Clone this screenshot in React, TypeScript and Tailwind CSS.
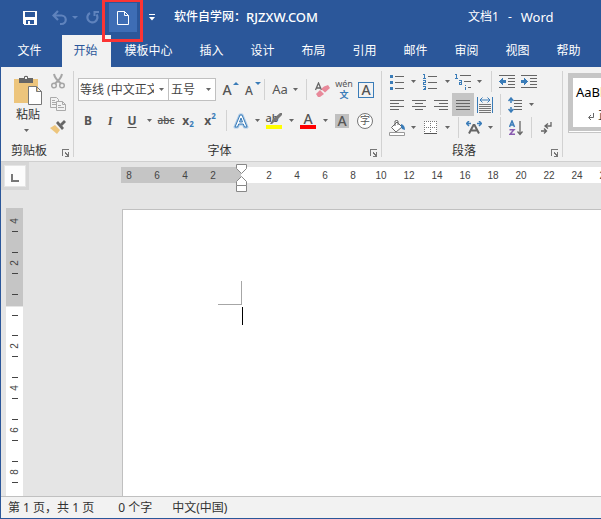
import type { FC, ReactNode } from 'react'
import clsx from 'clsx'

const tabs = ['模板中心', '插入', '设计', '布局', '引用', '邮件', '审阅', '视图', '帮助']

const Caret: FC<{ label: string; className?: string }> = ({ label, className }) => (
    <button aria-label={label} className={clsx('flex h-full shrink-0 items-center justify-center hover:bg-[#d5d5d5]', className ?? 'w-[10px]')}>
        <svg width="5" height="3" viewBox="0 0 5 3"><path d="M0 0h5L2.5 3z" fill="#666" /></svg>
    </button>
)

const Tool: FC<{ label: string; children: ReactNode; className?: string; active?: boolean }> = ({ label, children, className, active }) => (
    <button
        aria-label={label}
        className={clsx('relative flex h-full shrink-0 items-center justify-center hover:bg-[#d5d5d5]', className ?? 'w-[22px]', active && 'bg-[#c5c5c5]')}
    >
        {children}
    </button>
)

const Divider: FC<{ className: string }> = ({ className }) => (
    <span className={clsx('h-[21px] w-px shrink-0 bg-[#d2d2d2]', className)} />
)

const Launcher: FC<{ label: string }> = ({ label }) => (
    <button aria-label={label} className="absolute right-[3px] bottom-1">
        <svg width="8" height="8" viewBox="0 0 8 8" shapeRendering="crispEdges">
            <path d="M.5 6.5v-6h6" fill="none" stroke="#777" />
            <path d="M3 3h1v1h1v1h1V3h1v5H3V7h2V6H4V5H3z" fill="#777" />
        </svg>
    </button>
)

const Group: FC<{ name: string; children: ReactNode; className: string; labelClass: string }> = ({ name, children, className, labelClass }) => (
    <section aria-label={name} className={clsx('relative flex shrink-0 flex-col', className)}>
        <div className="flex-1">{children}</div>
        <div className={clsx('h-5 text-center leading-5 text-[#333]', labelClass)}>{name}</div>
        <Launcher label={name + '设置'} />
    </section>
)

const GroupLine = () => <span className="my-1 w-px shrink-0 bg-[#d2d2d2]" />

const Lines: FC<{ d: string }> = ({ d }) => (
    <svg width="16" height="16" viewBox="0 0 16 16" shapeRendering="crispEdges">
        <path d={d} stroke="#666" fill="none" />
    </svg>
)

const TitleBar = () => (
    <header className="flex h-[35px] items-center whitespace-nowrap text-white">
        <button aria-label="保存" className="ml-[22px] flex h-7 w-[14px] items-center">
            <svg width="14" height="14" viewBox="0 0 14 14" shapeRendering="crispEdges">
                <path fillRule="evenodd" d="M0 0h14v14H1l-1-1zM2 1v5h10V1zM3 9v4h2v-3h2v3h4V9z" fill="#fff" />
            </svg>
        </button>
        <button aria-label="撤消" className="ml-[15px] flex h-7 w-4 items-center">
            <svg width="16" height="16" viewBox="0 0 16 16" fill="none" stroke="#5f83bd" strokeWidth="2">
                <path d="M6 1L1.500 5.500 6 10M2 5.500h7.500a4 4 0 0 1 0 8.500H8" strokeWidth="2.200" />
            </svg>
        </button>
        <button aria-label="撤消选项" className="ml-1 flex h-7 w-[6px] items-center">
            <svg width="6" height="3" viewBox="0 0 6 3"><path d="M0 0h6L3 3z" fill="#5f83bd" /></svg>
        </button>
        <button aria-label="重复" className="ml-2 flex h-7 w-4 items-center">
            <svg width="14" height="15" viewBox="0 0 14 15" fill="none" stroke="#5f83bd" strokeWidth="2.200">
                <path d="M4 3A5 5 0 1 0 10.500 4.500" />
                <path d="M8.500 6V2H13" strokeWidth="2" />
            </svg>
        </button>
        <button aria-label="新建" className="relative ml-[7px] flex h-[29px] w-7 items-center justify-center bg-[#3e6db5]">
            <svg width="12" height="14" viewBox="0 0 12 14" fill="none" stroke="#fff">
                <path d="M.5.5h7l4 4v9H.5zM7.500.5v4h4" />
            </svg>
            <span className="absolute -top-1 -left-[7px] h-[43px] w-[41px] border-3 border-[#fb3434]" />
        </button>
        <button aria-label="自定义快速访问工具栏" className="ml-3 flex h-7 w-[6px] items-center">
            <svg width="6" height="7" viewBox="0 0 6 7" fill="#fff"><path d="M0 0h6v1H0zM0 3h6L3 6.500z" /></svg>
        </button>
        <span className="ml-[19px] flex items-center font-medium">软件自学网：<span className="text-[13px]">RJZXW.COM</span></span>
        <h1 className="ml-[150px] flex items-center gap-[9px]">
            <span>文档1</span>
            <span>-</span>
            <span className="text-[13px]">Word</span>
        </h1>
    </header>
)

const TabBar = () => (
    <nav className="flex h-8 overflow-hidden whitespace-nowrap text-white">
        <button className="w-[61px] shrink-0 pr-1">文件</button>
        <button className="w-[49px] shrink-0 bg-[#f2f2f2] pr-[2px] text-[#2b579a]">开始</button>
        {tabs.map((tab) => (
            <button key={tab} className={clsx('shrink-0', tab.length > 2 ? 'w-[75px]' : 'w-[51px]')}>{tab}</button>
        ))}
    </nav>
)

const Clipboard = () => (
    <Group name="剪贴板" className="w-[72px]" labelClass="pr-4">
        <div className="flex">
            <button className="ml-3 flex w-[30px] shrink-0 flex-col items-center pt-2">
                <svg width="30" height="30" viewBox="0 0 30 30">
                    <path d="M1 4h24v24H1z" fill="#edc57c" />
                    <path d="M6 3h5V1.500Q13 0 15 1.500V3h5v5H6z" fill="#666" />
                    <path d="M12 2h2v2h-2z" fill="#f2f2f2" />
                    <path d="M15.500 11.500h8l5 5v13h-13zM23.500 11.500v5h5" fill="#fff" stroke="#777" />
                </svg>
                <span className="h-5 leading-5 text-[#333]">粘贴</span>
                <svg className="mt-1 mr-[3px]" width="5" height="3" viewBox="0 0 5 3"><path d="M0 0h5L2.500 3z" fill="#666" /></svg>
            </button>
            <div className="ml-[7px] flex flex-col gap-2 pt-[6px]">
                <button aria-label="剪切">
                    <svg width="16" height="16" viewBox="0 0 16 16" fill="none" stroke="#a6a6a6" strokeWidth="1.500">
                        <path d="M4 1q1 5 7 9.500M12 1q-1 5-7 9.500" strokeWidth="2" />
                        <circle cx="4" cy="12.500" r="2.300" /><circle cx="12" cy="12.500" r="2.300" />
                    </svg>
                </button>
                <button aria-label="复制">
                    <svg width="16" height="15" viewBox="0 0 16 15" fill="#f2f2f2" stroke="#aaa">
                        <path d="M.5.500h6l2 2v8h-8zM2 3.500h3M2 5.500h4M2 7.500h4" />
                        <path d="M6.500 4.500h6l3 3v6h-9zM12.500 4.500v3h3M8 8.500h3M8 10.500h6" />
                    </svg>
                </button>
                <button aria-label="格式刷">
                    <svg width="16" height="14" viewBox="0 0 16 14">
                        <path d="M5 5l5 5-3 4-7-6z" fill="#edc57c" />
                        <path d="M6 3l2-2 6 7-2 2z" fill="#666" />
                        <path d="M10 4l4-4 2 2-4 4z" fill="#666" />
                    </svg>
                </button>
            </div>
        </div>
    </Group>
)

const Arrow: FC<{ d: string; className: string }> = ({ d, className }) => (
    <svg className={clsx('absolute', className)} width="6" height="3" viewBox="0 0 6 3"><path d={d} fill="#3a7cb8" /></svg>
)

const FontGroup = () => (
    <Group name="字体" className="w-[307px]" labelClass="pr-4">
        <div className="mt-[11px] ml-1 flex h-[23px] items-center">
            <label className="relative h-full w-[91px] shrink-0">
                <select aria-label="字体名称" className="h-full w-full appearance-none border border-[#c0c0c0] bg-white pr-[14px] pl-px text-[#444]">
                    <option>等线 (中文正文)</option>
                </select>
                <svg className="absolute top-[10px] right-[5px]" width="5" height="3" viewBox="0 0 5 3"><path d="M0 0h5L2.500 3z" fill="#666" /></svg>
            </label>
            <label className="relative h-full w-[47px] shrink-0">
                <select aria-label="字号" className="h-full w-full appearance-none border border-l-0 border-[#c0c0c0] bg-white pl-[2px] text-[#444]">
                    <option>五号</option>
                </select>
                <svg className="absolute top-[10px] right-[5px]" width="5" height="3" viewBox="0 0 5 3"><path d="M0 0h5L2.500 3z" fill="#666" /></svg>
            </label>
            <Tool label="增大字号" className="ml-[2px] w-[22px]">
                <span className="mr-1 text-sm font-medium">A</span>
                <Arrow d="M3 0l3 3H0z" className="top-1 right-px" />
            </Tool>
            <Tool label="减小字号">
                <span className="mt-[2px] mr-1 text-xs font-medium">A</span>
                <Arrow d="M0 0h6L3 3z" className="top-1 right-px" />
            </Tool>
            <Divider className="mr-[5px] ml-[2px]" />
            <Tool label="更改大小写" className="w-5"><span className="text-[13px]">Aa</span></Tool>
            <Caret label="大小写选项" />
            <Divider className="mr-1 ml-[6px]" />
            <Tool label="清除所有格式">
                <svg width="16" height="16" viewBox="0 0 16 16">
                    <path d="M1.500 8L4.500 1l3 7M2.500 6h4" stroke="#666" strokeWidth="1.300" fill="none" />
                    <path d="M10 4.500l4-1.500 2 3-5 4.500-4-3.500z" fill="#e8899a" />
                    <path d="M6 8l4 4-4 3H4l-2-3z" fill="#e8899a" />
                </svg>
            </Tool>
            <Tool label="拼音指南" className="w-[22px] flex-col">
                <span className="h-[10px] text-[9px] leading-[10px]">wén</span>
                <span className="h-3 text-[9px] leading-[12px] font-bold text-[#3a7cb8]">文</span>
            </Tool>
            <Tool label="字符边框">
                <span className="flex h-4 w-4 items-center justify-center border border-[#3a7cb8] text-sm font-medium">A</span>
            </Tool>
        </div>
        <div className="mt-2 ml-[3px] flex h-[23px] items-center">
            <Tool label="加粗"><b>B</b></Tool>
            <Tool label="倾斜"><i className="font-serif font-bold">I</i></Tool>
            <Tool label="下划线"><b className="underline underline-offset-2">U</b></Tool>
            <Caret label="下划线选项" className="w-3" />
            <Tool label="删除线"><s className="text-[10px] font-medium">abc</s></Tool>
            <Tool label="下标"><b>x</b><span className="mt-2 text-[8px] font-bold text-[#3a7cb8]">2</span></Tool>
            <Tool label="上标"><b>x</b><span className="mb-2 text-[8px] font-bold text-[#3a7cb8]">2</span></Tool>
            <Divider className="mr-[3px] ml-[5px]" />
            <Tool label="文本效果">
                <svg width="18" height="18" viewBox="0 0 18 18">
                    <path d="M3 15L8 3h2l5 12h-2.500l-1.200-3H6.700l-1.200 3zM7.500 10h3L9 6z" fill="#fff" stroke="#a9c8e6" strokeWidth="3" strokeLinejoin="round" />
                    <path d="M3 15L8 3h2l5 12h-2.500l-1.200-3H6.700l-1.200 3zM7.500 10h3L9 6z" fill="#fff" stroke="#3a7cb8" />
                </svg>
            </Tool>
            <Caret label="文本效果选项" />
            <Tool label="突出显示" className="w-6 flex-col">
                <span className="mr-1 h-[13px] text-[11px] leading-[12px] font-medium">ab</span>
                <span className="h-1 w-4 bg-[#ffff00]" />
                <svg className="absolute top-1 left-[8px]" width="12" height="12" viewBox="0 0 12 12"><path d="M10 0h2v2L6 8 4 9 2 11H0l3-5z" fill="#777" /></svg>
            </Tool>
            <Caret label="突出显示颜色" />
            <Tool label="字体颜色" className="w-6 flex-col">
                <span className="h-[13px] text-sm leading-[13px] font-medium">A</span>
                <span className="h-1 w-4 bg-[#ff0000]" />
            </Tool>
            <Caret label="字体颜色选项" />
            <Tool label="字符底纹" className="w-6">
                <span className="flex h-[14px] w-[14px] items-center justify-center bg-[#c0c0c0] text-sm font-medium">A</span>
            </Tool>
            <Tool label="带圈字符">
                <span className="flex h-4 w-4 shrink-0 items-center justify-center rounded-full border border-[#777] bg-white text-[10px]">字</span>
            </Tool>
        </div>
    </Group>
)

const ParagraphGroup = () => (
    <Group name="段落" className="w-[180px] pl-1" labelClass="pr-5">
        <div className="mt-[3px] flex h-[23px] items-center">
            <Tool label="项目符号">
                <svg width="14" height="16" viewBox="0 0 14 16" shapeRendering="crispEdges">
                    <path d="M0 1h3v3H0zM0 7h3v3H0zM0 13h3v3H0z" fill="#3a7cb8" />
                    <path d="M5 2.500h9M5 8.500h9M5 14.500h9" stroke="#666" />
                </svg>
            </Tool>
            <Caret label="项目符号库" />
            <Tool label="编号" className="w-6">
                <svg width="14" height="16" viewBox="0 0 14 16" shapeRendering="crispEdges">
                    <path d="M0 .5h1.500V4.500M0 4.500h3M0 6.500h2.500v2H.5v2H3M0 12.500h2.500v3H0M1 14h2" stroke="#3a7cb8" fill="none" />
                    <path d="M5 2.500h9M5 8.500h9M5 14.500h9" stroke="#666" />
                </svg>
            </Tool>
            <Caret label="编号库" />
            <Tool label="多级列表">
                <svg width="16" height="16" viewBox="0 0 16 16" shapeRendering="crispEdges">
                    <path d="M0 .5h1.500V4M0 4.500h3M4 6.500h2.500v4H4.500v-2H6M10.500 11v1M10.500 13v3" stroke="#3a7cb8" fill="none" />
                    <path d="M5 1.500h11M9 7.500h7M13 13.500h3" stroke="#666" />
                </svg>
            </Tool>
            <Caret label="多级列表库" />
            <Divider className="mr-1 ml-[7px]" />
            <Tool label="减少缩进量">
                <svg width="16" height="13" viewBox="0 0 16 13" shapeRendering="crispEdges">
                    <path d="M0 .5h16M9 3.500h7M9 6.500h7M9 9.500h7M0 12.500h16" stroke="#666" />
                    <path d="M0 6.500L4 3v2h3v3H4v2z" fill="#3a7cb8" />
                </svg>
            </Tool>
            <Tool label="增加缩进量">
                <svg width="16" height="13" viewBox="0 0 16 13" shapeRendering="crispEdges">
                    <path d="M0 .5h16M9 3.500h7M9 6.500h7M9 9.500h7M0 12.500h16" stroke="#666" />
                    <path d="M7 6.500L3 3v2H0v3h3v2z" fill="#3a7cb8" />
                </svg>
            </Tool>
        </div>
        <div className="flex h-[23px] items-center">
            <Tool label="左对齐"><Lines d="M1 3.500h14M1 6.500h9M1 9.500h14M1 12.500h9" /></Tool>
            <Tool label="居中"><Lines d="M1 3.500h14M4 6.500h8M1 9.500h14M4 12.500h8" /></Tool>
            <Tool label="右对齐"><Lines d="M1 3.500h14M6 6.500h9M1 9.500h14M6 12.500h9" /></Tool>
            <Tool label="两端对齐" active><Lines d="M1 3.500h14M1 6.500h14M1 9.500h14M1 12.500h14" /></Tool>
            <Tool label="分散对齐">
                <svg width="16" height="16" viewBox="0 0 16 16">
                    <path d="M2 7.500h12M2 9.500h12M2 11.500h12M2 13.500h12M2 15.500h12" stroke="#777" />
                    <path d="M.5 0v16M15.500 0v16M3 3h10M5.500.5L3 3l2.500 2.500M10.500.5L13 3l-2.500 2.500" fill="none" stroke="#3a7cb8" />
                </svg>
            </Tool>
            <Divider className="mr-[3px] ml-1" />
            <Tool label="行距">
                <svg width="14" height="16" viewBox="0 0 14 16">
                    <path d="M6 3.500h8M6 6.500h8M6 9.500h8M6 12.500h8" stroke="#666" />
                    <path d="M3 1v5M3 10v5M.5 4L3 1l2.500 3M.5 12L3 15l2.500-3" stroke="#3a7cb8" strokeWidth="1.500" fill="none" />
                </svg>
            </Tool>
            <Caret label="行距选项" />
        </div>
        <div className="flex h-[23px] items-center">
            <Tool label="底纹">
                <svg width="17" height="16" viewBox="0 0 17 16">
                    <path d="M8 2l5 5-6 5-4.500-4.500zM6 6V1q2-1 3 0v4" fill="#fff" stroke="#666" />
                    <path d="M12 4q4 1 4 6l-3-1-1-2z" fill="#3a7cb8" />
                    <path d="M.5 12.500h15v3H.5z" fill="#fff" stroke="#999" />
                </svg>
            </Tool>
            <Caret label="底纹颜色" />
            <Tool label="边框" className="w-6">
                <svg width="13" height="13" viewBox="0 0 13 13" shapeRendering="crispEdges">
                    <path d="M0 0h13v13H0z" fill="#fff" />
                    <path d="M0 .5h13M0 6.500h13M.5 0v13M6.500 0v13M12.500 0v13" stroke="#777" strokeDasharray="1 1" />
                    <path d="M0 12.500h13" stroke="#555" />
                </svg>
            </Tool>
            <Caret label="边框选项" />
            <Divider className="mr-1 ml-[6px]" />
            <Tool label="中文版式">
                <svg width="16" height="13" viewBox="0 0 16 13" fill="none">
                    <path d="M3 12.500L7.500 4h1L13 12.500M5 9.500h6" stroke="#666" strokeWidth="2" />
                    <path d="M3 0L.5 2.500 3 5M.5 2.500H5M13 0l2.500 2.500L13 5M15.500 2.500H11" stroke="#3a7cb8" strokeWidth="1.500" />
                </svg>
            </Tool>
            <Caret label="中文版式选项" />
            <Divider className="mr-1 ml-[5px]" />
            <Tool label="排序">
                <svg width="14" height="16" viewBox="0 0 14 16" fill="none">
                    <path d="M.5 7L3 1l2.500 6M1.500 5h3" stroke="#3a7cb8" strokeWidth="1.500" />
                    <path d="M.5 9.700h4.500L1 14.300h5" stroke="#8a5bb0" strokeWidth="1.500" />
                    <path d="M11 1v13M8.500 11.500L11 14.500l2.500-3" stroke="#666" strokeWidth="1.300" />
                </svg>
            </Tool>
            <Divider className="mx-1" />
            <Tool label="显示编辑标记">
                <svg width="12" height="12" viewBox="0 0 12 12" fill="none" stroke="#666" strokeWidth="1.300">
                    <path d="M10 0v4H5M7 1.500L4 4l3 2.500M0 9h5M3 6.500L5.500 9 3 11.500" />
                </svg>
            </Tool>
        </div>
    </Group>
)

const Ribbon = () => (
    <div className="flex h-[95px] overflow-hidden border-b border-[#cfcfcf] bg-[#f2f2f2] whitespace-nowrap text-[#555]">
        <Clipboard />
        <GroupLine />
        <FontGroup />
        <GroupLine />
        <ParagraphGroup />
        <GroupLine />
        <div className="ml-[5px] min-w-0 flex-1 self-start pt-[6px]">
            <div className="h-[60px] border border-r-0 border-[#c6c6c6] bg-white">
                <button className="flex h-[57px] w-[72px] flex-col items-start border-4 border-[#c6c6c6] bg-white pl-[3px] text-black">
                    <span className="mt-1 text-[13px] leading-5">AaBbCcDd</span>
                    <span className="mt-1 ml-3 flex items-center leading-5 text-[#444]">
                        <svg className="mr-1" width="6" height="7" viewBox="0 0 6 7" fill="none" stroke="#666"><path d="M5.500 0v4.500H1M3 2L.5 4.500 3 7" /></svg>
                        正文
                    </span>
                </button>
            </div>
        </div>
    </div>
)

const HorizontalRuler = () => (
    <div className="relative flex h-4 min-w-0 flex-1 font-['Liberation_Sans',sans-serif] text-[10px] leading-[17px]">
        <div className="flex w-[120px] shrink-0 justify-end overflow-hidden bg-[#c5c5c5] pr-[14px]">
            {[8, 6, 4, 2].map((n) => <span key={n} className="w-7 shrink-0 text-center">{n}</span>)}
        </div>
        <div className="flex min-w-0 flex-1 overflow-hidden bg-white pl-[14px]">
            {Array.from({ length: 13 }, (_, i) => (i + 1) * 2).map((n) => (
                <span key={n} className="w-7 shrink-0 text-center">{n}</span>
            ))}
        </div>
        <svg className="absolute -top-[3px] left-[115px]" width="11" height="28" viewBox="0 0 11 28" fill="#fff" stroke="#888">
            <path d="M.5.5h10v4l-5 5-5-5z" />
            <path d="M5.500 12.500l5 5v4H.5v-4z" />
            <path d="M.5 21.500h10v6H.5z" />
        </svg>
    </div>
)

const RulerCell: FC<{ n: number }> = ({ n }) => (
    <div className="flex h-[42px] shrink-0 flex-col items-center justify-between py-[10px]">
        <span className="h-px w-[6px] bg-[#444]" />
        <span className="-rotate-90 text-[10px] leading-[10px]">{n}</span>
        <span className="h-px w-[6px] bg-[#444]" />
    </div>
)

const VerticalRuler = () => (
    <div className="ml-[5px] flex w-[17px] shrink-0 flex-col font-['Liberation_Sans',sans-serif]">
        <div className="flex h-[98px] shrink-0 flex-col bg-[#c5c5c5]">
            <div className="flex h-[34px] flex-col items-center pt-2">
                <span className="-rotate-90 text-[10px] leading-[10px]">4</span>
                <span className="mt-[5px] h-px w-[6px] bg-[#444]" />
            </div>
            <RulerCell n={2} />
            <span className="mx-auto mt-[10px] h-px w-[6px] shrink-0 bg-[#444]" />
        </div>
        <div className="mt-px flex-1 bg-white">
            <span className="mx-auto mb-[9px] block h-[9px] w-[6px] border-b border-[#444]" />
            {[2, 4, 6, 8].map((n) => <RulerCell key={n} n={n} />)}
        </div>
    </div>
)

const Workspace = () => (
    <main className="flex flex-1 flex-col bg-[#e5e5e5] text-[#444]">
        <div className="flex items-start">
            <div className="flex h-7 w-[28px] shrink-0 items-center justify-center bg-[#d6d6d6]">
                <button aria-label="左对齐式制表符" className="flex h-[22px] w-[22px] items-center justify-center border border-[#e5e5e5] bg-[#fcfcfc]">
                    <span className="mt-1 h-2 w-2 border-b-2 border-l-2 border-[#777]" />
                </button>
            </div>
            <div className="flex min-w-0 flex-1 pt-[5px] pl-[92px]"><HorizontalRuler /></div>
        </div>
        <div className="mt-[18px] flex flex-1">
            <VerticalRuler />
            <article className="mt-px ml-[99px] flex-1 border-t border-l border-[#c0c0c0] bg-white pt-[71px] pl-[95px]">
                <div className="h-6 w-6 border-r border-b border-[#a6a6a6]" />
                <div className="mt-[2px] ml-6 h-[18px] w-px bg-black" />
            </article>
        </div>
    </main>
)

const App: FC = () => (
    <div className="flex min-h-screen flex-col overflow-hidden border-b border-l border-[#2b579a] bg-[#2b579a] font-['Noto_Sans','Noto_Sans_CJK_SC',sans-serif] text-xs">
        <TitleBar />
        <TabBar />
        <Ribbon />
        <Workspace />
        <footer className="flex h-[22px] items-center gap-5 border-t border-[#c0c0c0] bg-[#f2f2f2] pl-[7px] whitespace-nowrap text-[#333]">
            <button className="mr-1">第 1 页，共 1 页</button>
            <button>0 个字</button>
            <button>中文(中国)</button>
        </footer>
    </div>
)

export default App
